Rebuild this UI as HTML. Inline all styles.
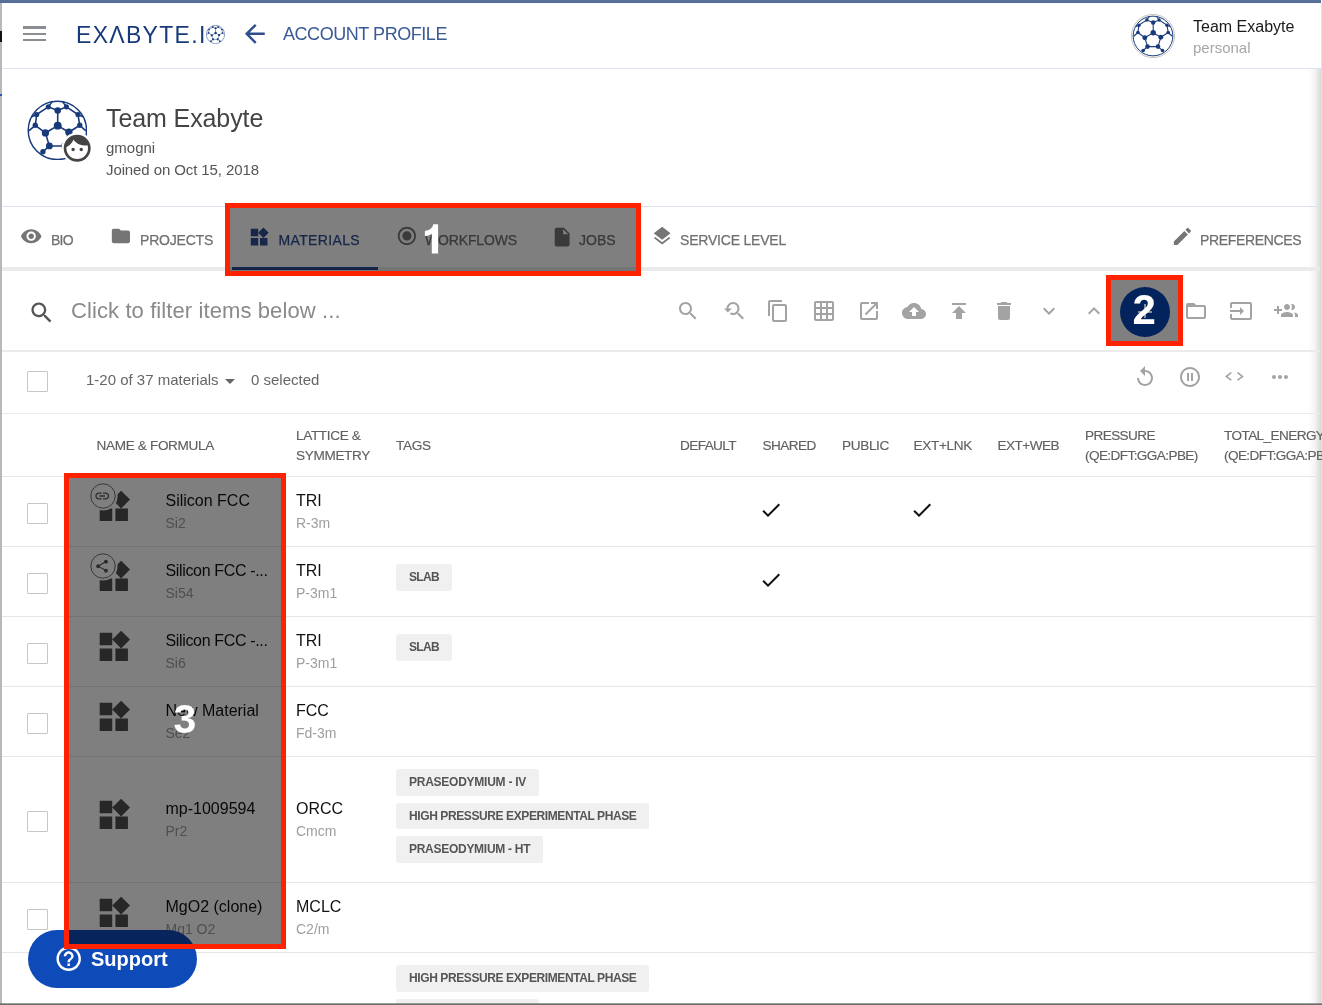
<!DOCTYPE html>
<html><head><meta charset="utf-8">
<style>
*{margin:0;padding:0;box-sizing:border-box}
html,body{width:1322px;height:1005px;overflow:hidden;background:#fff}
body{position:relative;font-family:"Liberation Sans",sans-serif;color:#000;-webkit-font-smoothing:antialiased}
.a{position:absolute;white-space:nowrap;line-height:1}
svg{position:absolute;display:block}
.hl{position:absolute;left:2px;width:1318px;height:1px;background:#e6e6e6}
.ico{fill:#9e9e9e}
.tab{fill:#757575}
.tl{position:absolute;font-size:14px;color:#707070;-webkit-text-stroke:0.25px currentColor;line-height:1;white-space:nowrap}
.hd{position:absolute;font-size:13.6px;color:#616161;line-height:19.5px;white-space:nowrap;letter-spacing:-0.35px;-webkit-text-stroke:0.15px currentColor}
.nm{position:absolute;font-size:16px;color:#111;line-height:1;white-space:nowrap}
.sb{position:absolute;font-size:14px;color:#9e9e9e;line-height:1;white-space:nowrap}
.cb{position:absolute;left:27px;width:21px;height:21px;border:1.3px solid #c6c6c6;border-radius:1px;background:#fff}
.tag{position:absolute;left:396px;height:26.5px;background:#f0f0f0;border-radius:3px;font-size:12px;font-weight:700;color:#555;line-height:26.5px;padding:0 13px;letter-spacing:-0.4px;white-space:nowrap}
.ov{position:absolute;border:5px solid #ff2200;background:rgba(0,0,0,.5)}
.num{position:absolute;color:#fff;font-weight:700;font-size:41px;line-height:1}
</style></head><body><div style="position:absolute;left:0;top:0;width:1322px;height:1005px;will-change:transform">

<!-- window frame -->
<div style="position:absolute;left:0;top:0;width:2px;height:1005px;background:#b8b8b8"></div>
<div style="position:absolute;left:0;top:0;width:1321px;height:3px;background:linear-gradient(#56709a 70%,#4a6290)"></div>
<div style="position:absolute;left:0;top:31px;width:2px;height:11px;background:#111"></div>
<div style="position:absolute;left:0;top:94px;width:2px;height:2px;background:#3050c0"></div>
<div style="position:absolute;left:1321px;top:3px;width:1px;height:1002px;background:#e2e2e2"></div>

<!-- header -->
<div style="position:absolute;left:2px;top:68px;width:1320px;height:1px;background:#dfe3ee"></div>
<div style="position:absolute;left:23px;top:26px;width:23px;height:2.8px;background:#8a8d91"></div><div style="position:absolute;left:23px;top:33px;width:23px;height:2px;background:#8a8d91"></div><div style="position:absolute;left:23px;top:39px;width:23px;height:2px;background:#8a8d91"></div>

<div class="a" style="left:76px;top:24px;font-size:23px;color:#183a7a;letter-spacing:1.3px">EX&#923;BYTE.I</div>
<svg style="left:206px;top:25px" width="19" height="19" viewBox="0 0 100 100"><use href="#ball"/></svg>

<svg style="left:239.6px;top:18.8px" width="29.7" height="29.7" viewBox="0 0 24 24"><path fill="#2f4f8c" d="M20 11H7.83l5.59-5.59L12 4l-8 8 8 8 1.41-1.41L7.83 13H20v-2z"/></svg>
<div class="a" style="left:283px;top:24.8px;font-size:18px;color:#3a5a96;letter-spacing:-0.45px">ACCOUNT PROFILE</div>

<svg style="left:1131px;top:14px" width="44" height="44" viewBox="0 0 100 100"><circle cx="50" cy="50" r="49" fill="#fff" stroke="#bbb" stroke-width="2"/><g transform="translate(3 3) scale(.94)"><use href="#ball"/></g></svg>
<div class="a" style="left:1193px;top:18.6px;font-size:16px;color:#1a1a1a">Team Exabyte</div>
<div class="a" style="left:1193px;top:40px;font-size:15px;color:#a6a6a6">personal</div>

<!-- right shadow -->
<div style="position:absolute;left:1308px;top:69px;width:13px;height:936px;background:linear-gradient(to right,rgba(0,0,0,0),rgba(0,0,0,.04) 50%,rgba(0,0,0,.15))"></div>

<!-- profile -->
<svg style="left:26.6px;top:99.5px" width="60.8" height="60.8" viewBox="0 0 100 100"><use href="#ball"/></svg>
<svg style="left:61.3px;top:131.6px" width="32.4" height="32.4" viewBox="0 0 24 24"><circle cx="12" cy="12" r="11.6" fill="#fff"/><path fill="#444" d="M9 11.75c-.69 0-1.25.56-1.25 1.25s.56 1.25 1.25 1.25 1.25-.56 1.25-1.25-.56-1.25-1.25-1.25zm6 0c-.69 0-1.25.56-1.25 1.25s.56 1.25 1.25 1.25 1.25-.56 1.25-1.25-.56-1.25-1.25-1.25zM12 2C6.48 2 2 6.48 2 12s4.48 10 10 10 10-4.48 10-10S17.52 2 12 2zm0 18c-4.41 0-8-3.59-8-8 0-.29.02-.58.05-.86 2.36-1.05 4.23-2.98 5.21-5.37C11.07 8.33 14.05 10 17.42 10c.78 0 1.53-.09 2.25-.26.21.71.33 1.47.33 2.26 0 4.41-3.59 8-8 8z"/></svg>
<div class="a" style="left:106px;top:105.6px;font-size:25px;color:#444;letter-spacing:-0.1px">Team Exabyte</div>
<div class="a" style="left:106px;top:139.5px;font-size:15px;color:#555">gmogni</div>
<div class="a" style="left:106px;top:162.2px;font-size:15px;color:#555;letter-spacing:-0.1px">Joined on Oct 15, 2018</div>

<div style="position:absolute;left:2px;top:206px;width:1318px;height:1px;background:#dde3ee"></div>

<!-- tabs -->
<svg style="left:19.9px;top:224.8px" width="22.4" height="22.4" viewBox="0 0 24 24"><path class="tab" d="M12 4.5C7 4.5 2.730 7.610 1 12c1.73 4.39 6 7.5 11 7.5s9.27-3.11 11-7.5c-1.73-4.39-6-7.5-11-7.5zM12 17c-2.76 0-5-2.24-5-5s2.24-5 5-5 5 2.24 5 5-2.24 5-5 5zm0-8c-1.66 0-3 1.34-3 3s1.34 3 3 3 3-1.34 3-3-1.34-3-3-3z"/></svg>
<div class="tl" style="left:51px;top:233.2px;letter-spacing:-0.75px">BIO</div>
<svg style="left:110px;top:225.4px" width="21.8" height="21.8" viewBox="0 0 24 24"><path class="tab" d="M10 4H4c-1.1 0-1.99.9-1.99 2L2 18c0 1.1.9 2 2 2h16c1.1 0 2-.9 2-2V8c0-1.1-.9-2-2-2h-8l-2-2z"/></svg>
<div class="tl" style="left:140px;top:233.2px;letter-spacing:-0.2px">PROJECTS</div>
<svg style="left:248.1px;top:225.9px" width="22.24" height="22.24" viewBox="0 0 24 24"><path fill="#2e4f92" d="M13 13v8h8v-8h-8zM3 21h8v-8H3v8zM3 3v8h8V3H3zm13.66-1.31L11 7.34 16.66 13l5.66-5.66-5.66-5.65z"/></svg>
<div class="tl" style="left:278.5px;top:233.2px;color:#2e4f92;letter-spacing:0.35px">MATERIALS</div>
<svg style="left:395.5px;top:225.4px" width="21.8" height="21.8" viewBox="0 0 24 24"><path class="tab" d="M12 7c-2.76 0-5 2.24-5 5s2.24 5 5 5 5-2.24 5-5-2.24-5-5-5zm0-5C6.48 2 2 6.48 2 12s4.48 10 10 10 10-4.48 10-10S17.52 2 12 2zm0 18c-4.420 0-8-3.58-8-8s3.58-8 8-8 8 3.58 8 8-3.58 8-8 8z"/></svg>
<div class="tl" style="left:425px;top:233.2px;letter-spacing:-0.15px">WORKFLOWS</div>
<svg style="left:551.3px;top:225.6px" width="22.3" height="22.3" viewBox="0 0 24 24"><path class="tab" d="M6 2c-1.1 0-1.99.9-1.99 2L4 20c0 1.1.89 2 1.99 2H18c1.1 0 2-.9 2-2V8l-6-6H6zm7 7V3.5L18.5 9H13z"/></svg>
<div class="tl" style="left:579px;top:233.2px">JOBS</div>
<svg style="left:651px;top:225.1px" width="22.3" height="22.3" viewBox="0 0 24 24"><path class="tab" d="M11.99 18.54l-7.37-5.73L3 14.07l9 7 9-7-1.63-1.27-7.38 5.74zM12 16l7.36-5.73L21 9l-9-7-9 7 1.63 1.27L12 16z"/></svg>
<div class="tl" style="left:680px;top:233.2px;letter-spacing:-0.2px">SERVICE LEVEL</div>
<svg style="left:1171px;top:225px" width="22.8" height="22.8" viewBox="0 0 24 24"><path class="tab" d="M3 17.25V21h3.75L17.81 9.94l-3.75-3.75L3 17.25zM20.71 7.04c.39-.39.39-1.02 0-1.41l-2.34-2.34c-.39-.39-1.02-.39-1.41 0l-1.83 1.83 3.75 3.75 1.83-1.83z"/></svg>
<div class="tl" style="left:1200px;top:233.2px;letter-spacing:-0.35px">PREFERENCES</div>
<div style="position:absolute;left:2px;top:267px;width:1318px;height:4px;background:#ebebeb"></div>
<div style="position:absolute;left:232px;top:267px;width:146px;height:3px;background:#2a4a90"></div>

<!-- search -->
<svg style="left:28.3px;top:298.6px" width="27.4" height="27.4" viewBox="0 0 24 24"><path fill="#555" d="M15.5 14h-.79l-.28-.27C15.41 12.59 16 11.11 16 9.5 16 5.91 13.09 3 9.5 3S3 5.91 3 9.5 5.91 16 9.5 16c1.61 0 3.09-.59 4.23-1.57l.27.28v.79l5 4.99L20.49 19l-4.99-5zm-6 0C7.010 14 5 11.99 5 9.5S7.01 5 9.5 5 14 7.01 14 9.5 11.99 14 9.5 14z"/></svg>
<div class="a" style="left:71px;top:300.2px;font-size:22px;color:#8a8a8a;letter-spacing:0.1px">Click to filter items below ...</div>

<svg style="left:676.0px;top:299.1px" width="24" height="24" viewBox="0 0 24 24"><path fill="#a3a3a3" d="M15.5 14h-.79l-.28-.27C15.41 12.59 16 11.11 16 9.5 16 5.91 13.09 3 9.5 3S3 5.91 3 9.5 5.91 16 9.5 16c1.61 0 3.09-.59 4.23-1.57l.27.28v.79l5 4.99L20.49 19l-4.99-5zm-6 0C7.01 14 5 11.99 5 9.5S7.01 5 9.5 5 14 7.01 14 9.5 11.99 14 9.5 14z"/></svg>
<svg style="left:721.5px;top:299.1px" width="24" height="24" viewBox="0 0 24 24"><path fill="#a3a3a3" d="M17.01 14h-.8l-.27-.27c.98-1.14 1.57-2.61 1.57-4.23 0-3.59-2.91-6.5-6.5-6.5s-6.5 3-6.5 6.5H2l3.84 4 4.16-4H6.51C6.51 7 8.53 5 11.01 5s4.5 2.01 4.5 4.5c0 2.48-2.02 4.5-4.5 4.5-.65 0-1.26-.14-1.82-.38L7.71 15.1c.97.57 2.09.9 3.3.9 1.61 0 3.08-.59 4.22-1.57l.27.27v.79l5.01 4.99L22 19l-4.99-5z"/></svg>
<svg style="left:766.0px;top:299.1px" width="24" height="24" viewBox="0 0 24 24"><path fill="#a3a3a3" d="M16 1H4c-1.1 0-2 .9-2 2v14h2V3h12V1zm3 4H8c-1.1 0-2 .9-2 2v14c0 1.1.9 2 2 2h11c1.1 0 2-.9 2-2V7c0-1.1-.9-2-2-2zm0 16H8V7h11v14z"/></svg>
<svg style="left:811.5px;top:299.1px" width="24" height="24" viewBox="0 0 24 24"><path fill="#a3a3a3" d="M20 2H4c-1.1 0-2 .9-2 2v16c0 1.1.9 2 2 2h16c1.1 0 2-.9 2-2V4c0-1.1-.9-2-2-2zM8 20H4v-4h4v4zm0-6H4v-4h4v4zm0-6H4V4h4v4zm6 12h-4v-4h4v4zm0-6h-4v-4h4v4zm0-6h-4V4h4v4zm6 12h-4v-4h4v4zm0-6h-4v-4h4v4zm0-6h-4V4h4v4z"/></svg>
<svg style="left:856.5px;top:299.1px" width="24" height="24" viewBox="0 0 24 24"><path fill="#a3a3a3" d="M19 19H5V5h7V3H5c-1.11 0-2 .9-2 2v14c0 1.1.89 2 2 2h14c1.1 0 2-.9 2-2v-7h-2v7zM14 3v2h3.59l-9.83 9.83 1.41 1.41L19 6.41V10h2V3h-7z"/></svg>
<svg style="left:901.5px;top:299.1px" width="24" height="24" viewBox="0 0 24 24"><path fill="#a3a3a3" d="M19.35 10.04C18.67 6.59 15.64 4 12 4 9.11 4 6.6 5.64 5.35 8.04 2.34 8.36 0 10.91 0 14c0 3.31 2.69 6 6 6h13c2.76 0 5-2.24 5-5 0-2.64-2.05-4.78-4.65-4.96zM14 13v4h-4v-4H7l5-5 5 5h-3z"/></svg>
<svg style="left:946.5px;top:299.1px" width="24" height="24" viewBox="0 0 24 24"><path fill="#a3a3a3" d="M5 4v2h14V4H5zm0 10h4v6h6v-6h4l-7-7-7 7z"/></svg>
<svg style="left:991.5px;top:299.1px" width="24" height="24" viewBox="0 0 24 24"><path fill="#a3a3a3" d="M6 19c0 1.1.9 2 2 2h8c1.1 0 2-.9 2-2V7H6v12zM19 4h-3.5l-1-1h-5l-1 1H5v2h14V4z"/></svg>
<svg style="left:1036.5px;top:299.1px" width="24" height="24" viewBox="0 0 24 24"><path fill="#a3a3a3" d="M16.59 8.59L12 13.17 7.41 8.59 6 10l6 6 6-6z"/></svg>
<svg style="left:1081.5px;top:299.1px" width="24" height="24" viewBox="0 0 24 24"><path fill="#a3a3a3" d="M12 8l-6 6 1.41 1.41L12 10.83l4.59 4.58L18 14z"/></svg>
<svg style="left:1133.0px;top:299.1px" width="24" height="24" viewBox="0 0 24 24"><path fill="#a3a3a3" d="M19 13h-6v6h-2v-6H5v-2h6V5h2v6h6v2z"/></svg>
<svg style="left:1184.0px;top:299.1px" width="24" height="24" viewBox="0 0 24 24"><path fill="#a3a3a3" d="M20 6h-8l-2-2H4c-1.1 0-1.99.9-1.99 2L2 18c0 1.1.9 2 2 2h16c1.1 0 2-.9 2-2V8c0-1.1-.9-2-2-2zm0 12H4V8h16v10z"/></svg>
<svg style="left:1229.0px;top:299.1px" width="24" height="24" viewBox="0 0 24 24"><path fill="#a3a3a3" d="M21 3.01H3c-1.1 0-2 .9-2 2V9h2V4.99h18v14.03H3V15H1v4.01c0 1.1.9 1.98 2 1.98h18c1.1 0 2-.88 2-1.98v-14c0-1.1-.9-2-2-2zM11 16l4-4-4-4v3H1v2h10v3z"/></svg>
<svg style="left:1274.0px;top:299.1px" width="24" height="24" viewBox="0 0 24 24"><path fill="#a3a3a3" d="M8 10H5V7H3v3H0v2h3v3h2v-3h3v-2zm10 1c1.66 0 2.99-1.34 2.99-3S19.66 5 18 5c-.32 0-.63.05-.91.14.57.81.9 1.79.9 2.86s-.34 2.04-.9 2.86c.28.09.59.14.91.14zm-5 0c1.66 0 2.99-1.34 2.99-3S14.66 5 13 5c-1.66 0-3 1.34-3 3s1.34 3 3 3zm6.62 2.16c.83.73 1.38 1.66 1.38 2.84v2h3v-2c0-1.54-2.37-2.49-4.38-2.84zM13 13c-2 0-6 1-6 3v2h12v-2c0-2-4-3-6-3z"/></svg>
<svg style="left:1133.0px;top:364.5px" width="24" height="24" viewBox="0 0 24 24"><path fill="#a3a3a3" d="M12 5V1L7 6l5 5V7c3.31 0 6 2.69 6 6s-2.69 6-6 6-6-2.69-6-6H4c0 4.42 3.58 8 8 8s8-3.58 8-8-3.58-8-8-8z"/></svg>
<svg style="left:1177.7px;top:364.5px" width="24" height="24" viewBox="0 0 24 24"><path fill="#a3a3a3" d="M9 16h2V8H9v8zm3-14C6.48 2 2 6.48 2 12s4.48 10 10 10 10-4.48 10-10S17.52 2 12 2zm0 18c-4.41 0-8-3.59-8-8s3.59-8 8-8 8 3.59 8 8-3.59 8-8 8zm1-4h2V8h-2v8z"/></svg>
<svg style="left:1267.8px;top:364.5px" width="24" height="24" viewBox="0 0 24 24"><path fill="#a3a3a3" d="M6 10c-1.1 0-2 .9-2 2s.9 2 2 2 2-.9 2-2-.9-2-2-2zm12 0c-1.1 0-2 .9-2 2s.9 2 2 2 2-.9 2-2-.9-2-2-2zm-6 0c-1.1 0-2 .9-2 2s.9 2 2 2 2-.9 2-2-.9-2-2-2z"/></svg>
<svg style="left:1224.8px;top:372.4px" width="18.8" height="8.8" viewBox="2 6 20 12" preserveAspectRatio="none"><path fill="#a3a3a3" d="M9.4 16.6L4.8 12l4.6-4.6L8 6l-6 6 6 6 1.4-1.4zm5.2 0l4.6-4.6-4.6-4.6L16 6l6 6-6 6-1.4-1.4z"/></svg>


<div style="position:absolute;left:2px;top:350px;width:1318px;height:2px;background:#ebebeb"></div>

<!-- second row -->
<div class="cb" style="top:371px"></div>
<div class="a" style="left:86px;top:372.3px;font-size:15px;color:#666">1-20 of 37 materials</div>
<svg style="left:218px;top:369px" width="24" height="24" viewBox="0 0 24 24"><path fill="#666" d="M7 10l5 5 5-5z"/></svg>
<div class="a" style="left:251px;top:372.3px;font-size:15px;color:#666">0 selected</div>

<div style="position:absolute;left:2px;top:413px;width:1318px;height:1px;background:#ebebeb"></div>

<!-- table header -->
<div class="hd" style="left:96.5px;top:435.5px">NAME &amp; FORMULA</div>
<div class="hd" style="left:296px;top:426px">LATTICE &amp;<br>SYMMETRY</div>
<div class="hd" style="left:396px;top:435.5px">TAGS</div>
<div class="hd" style="left:680px;top:435.5px;letter-spacing:-0.6px">DEFAULT</div>
<div class="hd" style="left:762.5px;top:435.5px;letter-spacing:-0.55px">SHARED</div>
<div class="hd" style="left:842px;top:435.5px">PUBLIC</div>
<div class="hd" style="left:913.5px;top:435.5px">EXT+LNK</div>
<div class="hd" style="left:997.5px;top:435.5px;letter-spacing:-0.55px">EXT+WEB</div>
<div class="hd" style="left:1085px;top:426px;letter-spacing:-0.6px">PRESSURE<br>(QE:DFT:GGA:PBE)</div>
<div class="hd" style="left:1224px;top:426px;letter-spacing:-0.6px">TOTAL_ENERGY<br>(QE:DFT:GGA:PBE)</div>

<div class="hl" style="top:476px"></div>
<div class="cb" style="top:503.0px"></div>
<svg style="left:95.30px;top:488.35px" width="37.64" height="37.64" viewBox="0 0 24 24"><path fill="#4e4e4e" d="M13 13v8h8v-8h-8zM3 21h8v-8H3v8zM3 3v8h8V3H3zm13.66-1.31L11 7.34 16.66 13l5.66-5.66-5.66-5.65z"/></svg>
<svg style="left:87.5px;top:480.5px" width="30" height="30" viewBox="0 0 30 30"><circle cx="15" cy="15" r="14.6" fill="#fff"/><circle cx="15" cy="15" r="12.2" fill="#fff" stroke="#707070" stroke-width="1"/><g transform="translate(5.95 6.72) scale(0.69)"><path fill="#555" d="M3.9 12c0-1.71 1.39-3.1 3.1-3.1h4V7H7c-2.76 0-5 2.24-5 5s2.24 5 5 5h4v-1.9H7c-1.71 0-3.1-1.39-3.1-3.1zM8 13h8v-2H8v2zm9-6h-4v1.9h4c1.71 0 3.1 1.39 3.1 3.1s-1.39 3.1-3.1 3.1h-4V17h4c2.76 0 5-2.24 5-5s-2.24-5-5-5z"/></g></svg>
<div class="nm" style="left:165.5px;top:493.26px;letter-spacing:0px">Silicon FCC</div>
<div class="sb" style="left:165.5px;top:516.15px">Si2</div>
<div class="nm" style="left:296px;top:493.26px">TRI</div>
<div class="sb" style="left:296px;top:516.15px">R-3m</div>
<svg style="left:759.2px;top:497.5px" width="24" height="24" viewBox="0 0 24 24"><path fill="#111" d="M9 16.17L4.83 12l-1.42 1.41L9 19 21 7l-1.41-1.41z"/></svg>
<svg style="left:910.2px;top:497.5px" width="24" height="24" viewBox="0 0 24 24"><path fill="#111" d="M9 16.17L4.83 12l-1.42 1.41L9 19 21 7l-1.41-1.41z"/></svg>
<div class="hl" style="top:546px"></div>
<div class="cb" style="top:573.0px"></div>
<svg style="left:95.30px;top:558.35px" width="37.64" height="37.64" viewBox="0 0 24 24"><path fill="#4e4e4e" d="M13 13v8h8v-8h-8zM3 21h8v-8H3v8zM3 3v8h8V3H3zm13.66-1.31L11 7.34 16.66 13l5.66-5.66-5.66-5.65z"/></svg>
<svg style="left:87.5px;top:550.5px" width="30" height="30" viewBox="0 0 30 30"><circle cx="15" cy="15" r="14.6" fill="#fff"/><circle cx="15" cy="15" r="12.2" fill="#fff" stroke="#707070" stroke-width="1"/><g transform="translate(6.25 7.4) scale(0.65)"><path fill="#555" d="M18 16.08c-.76 0-1.44.3-1.96.77L8.91 12.7c.05-.23.09-.46.09-.7s-.04-.47-.09-.7l7.05-4.11c.54.5 1.25.81 2.04.81 1.66 0 3-1.34 3-3s-1.34-3-3-3-3 1.34-3 3c0 .24.04.47.09.7L8.04 9.81C7.5 9.31 6.79 9 6 9c-1.66 0-3 1.34-3 3s1.34 3 3 3c.79 0 1.5-.31 2.04-.81l7.12 4.16c-.05.21-.08.43-.08.65 0 1.61 1.31 2.92 2.92 2.92 1.61 0 2.92-1.31 2.92-2.92s-1.31-2.92-2.92-2.92z"/></g></svg>
<div class="nm" style="left:165.5px;top:563.26px;letter-spacing:-0.35px">Silicon FCC -...</div>
<div class="sb" style="left:165.5px;top:586.15px">Si54</div>
<div class="nm" style="left:296px;top:563.26px">TRI</div>
<div class="sb" style="left:296px;top:586.15px">P-3m1</div>
<svg style="left:759.2px;top:567.5px" width="24" height="24" viewBox="0 0 24 24"><path fill="#111" d="M9 16.17L4.83 12l-1.42 1.41L9 19 21 7l-1.41-1.41z"/></svg>
<div class="tag" style="top:564.0px;letter-spacing:-0.7px">SLAB</div>
<div class="hl" style="top:616px"></div>
<div class="cb" style="top:643.0px"></div>
<svg style="left:95.30px;top:628.35px" width="37.64" height="37.64" viewBox="0 0 24 24"><path fill="#4e4e4e" d="M13 13v8h8v-8h-8zM3 21h8v-8H3v8zM3 3v8h8V3H3zm13.66-1.31L11 7.34 16.66 13l5.66-5.66-5.66-5.65z"/></svg>
<div class="nm" style="left:165.5px;top:633.26px;letter-spacing:-0.35px">Silicon FCC -...</div>
<div class="sb" style="left:165.5px;top:656.15px">Si6</div>
<div class="nm" style="left:296px;top:633.26px">TRI</div>
<div class="sb" style="left:296px;top:656.15px">P-3m1</div>
<div class="tag" style="top:634.0px;letter-spacing:-0.7px">SLAB</div>
<div class="hl" style="top:686px"></div>
<div class="cb" style="top:713.0px"></div>
<svg style="left:95.30px;top:698.35px" width="37.64" height="37.64" viewBox="0 0 24 24"><path fill="#4e4e4e" d="M13 13v8h8v-8h-8zM3 21h8v-8H3v8zM3 3v8h8V3H3zm13.66-1.31L11 7.34 16.66 13l5.66-5.66-5.66-5.65z"/></svg>
<div class="nm" style="left:165.5px;top:703.26px;letter-spacing:0px">New Material</div>
<div class="sb" style="left:165.5px;top:726.15px">Se2</div>
<div class="nm" style="left:296px;top:703.26px">FCC</div>
<div class="sb" style="left:296px;top:726.15px">Fd-3m</div>
<div class="hl" style="top:756px"></div>
<div class="cb" style="top:811.0px"></div>
<svg style="left:95.30px;top:796.35px" width="37.64" height="37.64" viewBox="0 0 24 24"><path fill="#4e4e4e" d="M13 13v8h8v-8h-8zM3 21h8v-8H3v8zM3 3v8h8V3H3zm13.66-1.31L11 7.34 16.66 13l5.66-5.66-5.66-5.65z"/></svg>
<div class="nm" style="left:165.5px;top:801.26px;letter-spacing:0px">mp-1009594</div>
<div class="sb" style="left:165.5px;top:824.15px">Pr2</div>
<div class="nm" style="left:296px;top:801.26px">ORCC</div>
<div class="sb" style="left:296px;top:824.15px">Cmcm</div>
<div class="tag" style="top:769.30px;letter-spacing:-0.25px">PRASEODYMIUM - IV</div>
<div class="tag" style="top:802.65px;letter-spacing:-0.4px">HIGH PRESSURE EXPERIMENTAL PHASE</div>
<div class="tag" style="top:836.00px;letter-spacing:-0.28px">PRASEODYMIUM - HT</div>
<div class="hl" style="top:882px"></div>
<div class="cb" style="top:909.0px"></div>
<svg style="left:95.30px;top:894.35px" width="37.64" height="37.64" viewBox="0 0 24 24"><path fill="#4e4e4e" d="M13 13v8h8v-8h-8zM3 21h8v-8H3v8zM3 3v8h8V3H3zm13.66-1.31L11 7.34 16.66 13l5.66-5.66-5.66-5.65z"/></svg>
<div class="nm" style="left:165.5px;top:899.26px;letter-spacing:0px">MgO2 (clone)</div>
<div class="sb" style="left:165.5px;top:922.15px">Mg1 O2</div>
<div class="nm" style="left:296px;top:899.26px">MCLC</div>
<div class="sb" style="left:296px;top:922.15px">C2/m</div>
<div class="hl" style="top:952px"></div>
<div class="tag" style="top:965.30px;letter-spacing:-0.4px">HIGH PRESSURE EXPERIMENTAL PHASE</div>
<div class="tag" style="top:998.65px;letter-spacing:-0.25px">PRASEODYMIUM - IV</div>


<!-- support -->
<div style="position:absolute;left:28px;top:930px;width:169px;height:58px;border-radius:29px;background:#0f4bb8"></div>
<svg style="left:53.7px;top:944px" width="29.4" height="29.4" viewBox="0 0 24 24"><path fill="#fff" d="M11 18h2v-2h-2v2zm1-16C6.48 2 2 6.48 2 12s4.48 10 10 10 10-4.48 10-10S17.52 2 12 2zm0 18c-4.41 0-8-3.590-8-8s3.59-8 8-8 8 3.59 8 8-3.59 8-8 8zm0-14c-2.21 0-4 1.79-4 4h2c0-1.1.9-2 2-2s2 .9 2 2c0 2-3 1.75-3 5h2c0-2.25 3-2.5 3-5 0-2.21-1.79-4-4-4z"/></svg>
<div class="a" style="left:91px;top:949px;font-size:20px;font-weight:700;color:#fff">Support</div>

<!-- bottom frame -->
<div style="position:absolute;left:0;top:1002.5px;width:1322px;height:2.5px;background:linear-gradient(rgba(110,110,110,.4),#6a6a6a 60%)"></div>

<!-- annotations -->
<div class="ov" style="left:225px;top:203.3px;width:415.6px;height:73px"></div>
<svg style="left:420px;top:220px" width="24" height="40" viewBox="0 0 24 40"><path fill="#fff" d="M18.1 4.3L13.3 4.3C12.6 7.6 9.6 10.6 4.9 10.9L4.9 16.2C8 16 10.3 14.9 11.8 13.6L11.8 33.4L18.1 33.4Z"/></svg>
<div class="ov" style="left:1106.4px;top:275.3px;width:77px;height:71.2px"></div>
<div style="position:absolute;left:1120px;top:287px;width:50px;height:50px;border-radius:25px;background:#03235c"></div>
<div style="position:absolute;left:1137.5px;top:310.5px;width:14px;height:2px;background:#8a8f99"></div>
<div style="position:absolute;left:1144px;top:304px;width:2px;height:14px;background:#8a8f99"></div>
<div class="num" style="left:1132.6px;top:289.3px;font-size:42px">2</div>
<div class="ov" style="left:64px;top:473px;width:222px;height:476px"></div>
<div class="num" style="left:173.5px;top:699px">3</div>

<svg width="0" height="0" style="position:absolute">
<defs>
<g id="ball">
<circle cx="50" cy="50" r="48" fill="none" stroke="#183a7a" stroke-width="2.4"/>
<g stroke="#183a7a" stroke-width="2.6" fill="none" stroke-linecap="round">
<path d="M50.5 17.2L50.5 42.2L30.3 54.2L36.8 75.6L62 75.6L68.9 53L50.5 42.2M50.5 17.2L35 11.3L16 23.8L13.6 41.6L30.3 54.2M50.5 17.2L64.8 11.3L83.8 23.8L86.8 41.6L68.9 53M36.8 75.6L26.2 85.1M62 75.6L73 85.1M13.6 41.6L4 50M86.8 41.6L96 50M35 11.3L41 3.5M64.8 11.3L59 3.5M16 23.8L9 27M83.8 23.8L91 27"/>
</g>
<g fill="#183a7a">
<circle cx="50.5" cy="17.2" r="5.4"/><circle cx="35" cy="11.3" r="4.2"/><circle cx="64.8" cy="11.3" r="4.2"/>
<circle cx="16" cy="23.8" r="4.2"/><circle cx="83.8" cy="23.8" r="4.2"/>
<circle cx="50.5" cy="42.2" r="6.5"/><circle cx="13.6" cy="41.6" r="4.4"/><circle cx="86.8" cy="41.6" r="4.4"/>
<circle cx="30.3" cy="54.2" r="6"/><circle cx="68.9" cy="53" r="6"/>
<circle cx="36.8" cy="75.6" r="5.6"/><circle cx="62" cy="75.6" r="5.6"/>
<circle cx="26.2" cy="85.1" r="4.4"/><circle cx="73" cy="85.1" r="4.4"/>
</g>
</g>
</defs></svg>
</div></body></html>
